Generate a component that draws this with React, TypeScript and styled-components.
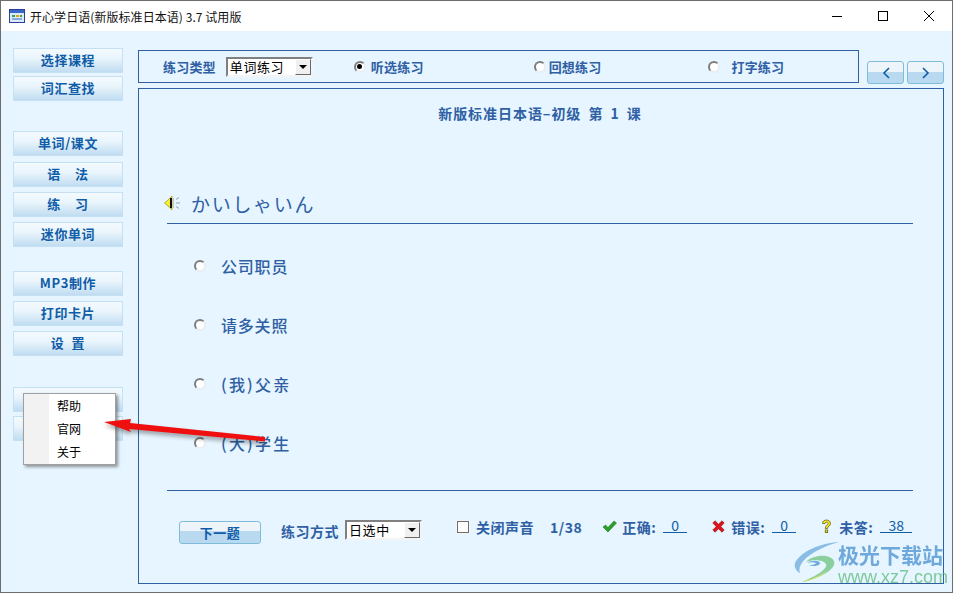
import React from 'react';
import styled, { createGlobalStyle } from 'styled-components';

const GlobalStyle = createGlobalStyle`
  html, body { margin: 0; padding: 0; background: #e6f5ff; }
  body { font-family: "Noto Sans CJK SC", "Liberation Sans", sans-serif; }
`;

const CJK = `"Noto Sans CJK SC", "Liberation Sans", sans-serif`;
const Blue = '#2f60a4';

const Window = styled.div`
  position: relative;
  box-sizing: border-box;
  width: 953px;
  height: 593px;
  border: 1px solid #6e6e6e;
  background: #e6f5ff;
  overflow: hidden;
  display: flex;
  flex-direction: column;
`;

const TitleBar = styled.div`
  height: 30px;
  flex: none;
  background: #fff;
  display: flex;
  align-items: center;
  padding-left: 8px;
`;

const TitleText = styled.div`
  margin-left: 5px;
  font-size: 12px;
  letter-spacing: 0.06px;
  color: #111;
  flex: 1;
`;

const WinButton = styled.div`
  width: 46px;
  height: 30px;
  display: flex;
  align-items: center;
  justify-content: center;
`;

const Body = styled.div`
  flex: 1;
  display: flex;
  min-height: 0;
`;

const Sidebar = styled.div`
  width: 121px;
  flex: none;
  box-sizing: border-box;
  padding: 17px 0 0 12px;
  display: flex;
  flex-direction: column;
`;

const SideButton = styled.div<{ $top: number }>`
  width: 110px;
  height: 25px;
  flex: none;
  box-sizing: border-box;
  margin-top: ${p => p.$top}px;
  padding-bottom: 2px;
  border: 1px solid #c4e0f2;
  background: linear-gradient(#f3fafe, #eaf5fc 40%, #c0dcf1);
  color: #0f5ca8;
  font-size: 13px;
  font-weight: 700;
  letter-spacing: 0.6px;
  white-space: pre;
  display: flex;
  align-items: center;
  justify-content: center;
`;

const Content = styled.div`
  flex: 1;
  display: flex;
  flex-direction: column;
  padding: 19px 8px 8px 16px;
  min-width: 0;
`;

const TopRow = styled.div`
  display: flex;
  align-items: flex-end;
  height: 33px;
  flex: none;
`;

const TopPanel = styled.div`
  box-sizing: border-box;
  width: 722px;
  height: 33px;
  border: 1px solid ${Blue};
  display: flex;
  align-items: center;
  padding-left: 24px;
`;

const NavGroup = styled.div`
  display: flex;
  gap: 3px;
  margin-left: 8px;
  margin-bottom: -1px;
`;

const NavButton = styled.div`
  box-sizing: border-box;
  width: 37px;
  height: 23px;
  border: 1px solid #7fbcd9;
  border-radius: 3px;
  background: linear-gradient(#edf5fb 50%, #b9d9f0 50%);
  display: flex;
  align-items: center;
  justify-content: center;
`;

const MainPanel = styled.div`
  flex: 1;
  margin-top: 5px;
  border: 1px solid ${Blue};
  display: flex;
  flex-direction: column;
  padding: 0 30px 0 28px;
  min-height: 0;
`;

const Label = styled.span<{ $left?: number; $large?: boolean }>`
  margin-left: ${p => p.$left ?? 0}px;
  font-family: ${CJK};
  font-size: ${p => (p.$large ? 14 : 13)}px;
  font-weight: 700;
  letter-spacing: ${p => (p.$large ? 0.5 : 0.2)}px;
  color: ${Blue};
  white-space: nowrap;
`;

const FooterLabel = styled(Label)`
  margin-bottom: 3px;
`;

const StatLabel = styled(Label)`
  display: inline-block;
  width: 37px;
`;

const Select = styled.div<{ $width: number; $left: number }>`
  box-sizing: border-box;
  width: ${p => p.$width}px;
  height: 20px;
  margin-left: ${p => p.$left}px;
  background: #fff;
  border: 2px solid;
  border-color: #808080 #f4f4f4 #f4f4f4 #808080;
  display: flex;
  align-items: center;
  font-size: 13px;
  letter-spacing: 0.6px;
  color: #000;
  padding-left: 2px;
  position: relative;
`;

const FooterSelect = styled(Select)`
  margin-bottom: 5px;
`;

const SelectArrow = styled.div`
  position: absolute;
  right: 0;
  top: 0;
  bottom: 0;
  width: 16px;
  box-sizing: border-box;
  background: #f0f0f0;
  border: 1px solid;
  border-color: #fff #696969 #696969 #fff;
  display: flex;
  align-items: center;
  justify-content: center;
  &::after {
    content: '';
    border-left: 4px solid transparent;
    border-right: 4px solid transparent;
    border-top: 4px solid #000;
  }
`;

const Radio = styled.div<{ $left: number; $on?: boolean }>`
  box-sizing: border-box;
  width: 12px;
  height: 12px;
  flex: none;
  margin-left: ${p => p.$left}px;
  border-radius: 50%;
  background: #fff;
  border: 2px solid;
  border-color: #7d7d7d #e8eef2 #e8eef2 #7d7d7d;
  display: flex;
  align-items: center;
  justify-content: center;
  &::after {
    content: '';
    display: ${p => (p.$on ? 'block' : 'none')};
    width: 5px;
    height: 5px;
    border-radius: 50%;
    background: #000;
  }
`;

const Heading = styled.div`
  margin-top: 14px;
  text-align: center;
  font-size: 14px;
  line-height: 20px;
  font-weight: 700;
  letter-spacing: 0.95px;
  word-spacing: 3px;
  color: ${Blue};
`;

const Question = styled.div`
  margin-top: 60px;
  height: 40px;
  display: flex;
  align-items: center;
  margin-left: -3px;
  box-sizing: border-box;
`;

const Rule = styled.div`
  height: 1px;
  flex: none;
  background: ${Blue};
`;

const Kana = styled.span`
  margin-left: 10px;
  font-size: 19px;
  letter-spacing: 1.7px;
  color: ${Blue};
`;

const Options = styled.div`
  height: 266px;
  padding-top: 12px;
  box-sizing: border-box;
  display: flex;
  flex-direction: column;
`;

const Option = styled.div`
  height: 59px;
  display: flex;
  align-items: center;
  flex: none;
`;

const OptionText = styled.span<{ $spacing: number }>`
  margin-left: 15px;
  font-size: 16px;
  font-weight: 500;
  letter-spacing: ${p => p.$spacing}px;
  color: ${Blue};
`;

const Footer = styled.div`
  margin-top: 29px;
  height: 24px;
  display: flex;
  align-items: center;
`;

const Stats = styled.div`
  display: flex;
  align-items: center;
  margin-bottom: 11px;
`;

const NextButton = styled.div`
  box-sizing: border-box;
  width: 82px;
  height: 23px;
  margin-left: 12px;
  border: 1px solid #7fbcd9;
  border-radius: 3px;
  background: linear-gradient(#edf5fb 45%, #b9d9f0 45%);
  color: #0f5ca8;
  font-size: 13px;
  font-weight: 700;
  letter-spacing: 0.5px;
  display: flex;
  align-items: center;
  justify-content: center;
`;

const CheckBox = styled.div`
  box-sizing: border-box;
  width: 12px;
  height: 12px;
  margin-left: 35px;
  background: #fff;
  border: 1px solid #707070;
  outline: 1px solid #f2f4f6;
`;

const Score = styled.span<{ $width: number }>`
  display: inline-block;
  width: ${p => p.$width}px;
  margin: 0 0 2px 4px;
  border-bottom: 1px solid #0f5ca8;
  text-align: center;
  font-size: 14px;
  line-height: 14px;
  color: #0f5ca8;
`;

const IconSlot = styled.span<{ $left: number }>`
  display: flex;
  margin-left: ${p => p.$left}px;
  margin-right: 5px;
`;

const Menu = styled.div`
  position: absolute;
  left: 22px;
  top: 392px;
  width: 93px;
  height: 72px;
  box-sizing: border-box;
  background: linear-gradient(90deg, #f2f2f2 25px, #fff 25px);
  border: 1px solid #a0a0a0;
  box-shadow: 2px 2px 3px rgba(0, 0, 0, 0.4);
  padding: 0 0 0 33px;
`;

const MenuItem = styled.div`
  height: 23px;
  line-height: 23px;
  font-size: 12px;
  color: #000;
`;

const Overlay = styled.svg`
  position: absolute;
  left: -1px;
  top: -1px;
  pointer-events: none;
  filter: drop-shadow(0 3px 2px rgba(0, 0, 0, 0.35));
`;

const Watermark = styled.div`
  position: absolute;
  left: 792px;
  top: 540px;
  display: flex;
  opacity: 0.85;
`;

const BrandColumn = styled.div`
  display: flex;
  flex-direction: column;
  margin-left: -3px;
`;

const BrandName = styled.span`
  font-size: 21px;
  line-height: 26px;
  font-weight: 700;
  color: #5b9bd5;
`;

const BrandUrl = styled.span`
  margin-top: 1px;
  font-family: "Liberation Sans", sans-serif;
  font-size: 18px;
  line-height: 18px;
  color: #6cc28a;
`;

const sideButtons: [string, number][] = [
  ['选择课程', 0],
  ['词汇查找', 3],
  ['单词/课文', 30],
  ['语    法', 6],
  ['练    习', 5],
  ['迷你单词', 5],
  ['MP3制作', 24],
  ['打印卡片', 5],
  ['设  置', 5],
  ['', 31],
  ['', 4],
];

const options: [string, number][] = [
  ['公司职员', 0.8],
  ['请多关照', 0.8],
  ['(我)父亲', 2.2],
  ['(大)学生', 2.2],
];

function AppIcon() {
  return (
    <svg width="16" height="14" viewBox="0 0 16 14">
      <rect x="0.5" y="0.5" width="15" height="13" fill="#dcebfa" stroke="#2b3f9a" />
      <rect x="1" y="1" width="14" height="3" fill="#3a66c8" />
      <rect x="3" y="6" width="3" height="2" fill="#3aa14a" />
      <rect x="7" y="6" width="3" height="2" fill="#e2a21f" />
      <rect x="11" y="6" width="2" height="2" fill="#3aa14a" />
      <rect x="3" y="9" width="10" height="2" fill="#8fa8dd" />
    </svg>
  );
}

function Chevron({ flip }: { flip?: boolean }) {
  return (
    <svg width="8" height="12" viewBox="0 0 8 12">
      <path d={flip ? 'M1 1l5 5-5 5' : 'M7 1L2 6l5 5'} fill="none" stroke="#0f5ca8" strokeWidth="1.6" />
    </svg>
  );
}

function SpeakerIcon() {
  return (
    <svg width="17" height="16" viewBox="0 0 17 16">
      <path d="M0.500 8L4 5l4-4v14l-4-4z" fill="#f6ee2c" stroke="#a8a020" strokeWidth="0.8" />
      <path d="M6 3h2v10H6z" fill="#111" />
      <path d="M9 3h1v10H9z" fill="#c8c8c8" />
      <path d="M12 4.500l3-2M12 8h4M12 11.500l3 2" stroke="#a0a0a0" strokeWidth="1" fill="none" />
    </svg>
  );
}

function CheckIcon() {
  return (
    <svg width="15" height="13" viewBox="0 0 15 13">
      <path d="M1 7l2.500-2 2.500 2.500L12 1l2.500 2L6 12z" fill="#2e9e2a" stroke="#1f7d1d" strokeWidth="0.6" />
    </svg>
  );
}

function CrossIcon() {
  return (
    <svg width="13" height="13" viewBox="0 0 13 13">
      <path d="M0.800 3L3 .8l3.500 3.400L10 .8 12.200 3 8.800 6.500l3.400 3.500-2.200 2.200-3.500-3.400L3 12.200 .8 10l3.400-3.500z" fill="#e1121a" stroke="#7d1015" strokeWidth="0.6" />
    </svg>
  );
}

function QuestionIcon() {
  return (
    <svg width="11" height="15" viewBox="0 0 11 15">
      <path d="M1.500 4.500C1.500 2.300 3.300 1 5.500 1s4 1.300 4 3.400c0 2.600-3 2.800-3 5.100H4.300c0-3.300 2.700-3.500 2.700-5 0-.8-.6-1.300-1.500-1.300S4 3.700 4 4.500z" fill="#f5e61e" stroke="#6d6410" strokeWidth="0.8" />
      <rect x="4.300" y="11" width="2.400" height="2.600" fill="#f5e61e" stroke="#6d6410" strokeWidth="0.8" />
    </svg>
  );
}

function SwirlLogo() {
  return (
    <svg width="48" height="42" viewBox="0 0 48 42">
      <path d="M46 1C28 2 8 10 2 22c-1 4 1 8 5 10C3 20 24 7 46 1z" fill="#79b4e2" />
      <path d="M13 21c6-7 24-9 28-1 3 7-12 17-32 21 14-6 26-13 24-18-2-4-13-5-20-2z" fill="#7cc98f" />
      <path d="M9 41c10-3 20-7 26-12-6 6-14 10-26 12z" fill="#d8dd4f" />
      <path d="M14 22c4-3 12-3 13 0 0 3-7 4-11 2 4 0 7-1 7-2-2-1-6-1-9 0z" fill="#5a9fd8" />
    </svg>
  );
}

export default function App() {
  return (
    <>
      <GlobalStyle />
      <Window>
        <TitleBar>
          <AppIcon />
          <TitleText>开心学日语(新版标准日本语) 3.7 试用版</TitleText>
          <WinButton>
            <svg width="10" height="10" viewBox="0 0 10 10"><path d="M0 5.500h10" stroke="#000" /></svg>
          </WinButton>
          <WinButton>
            <svg width="10" height="10" viewBox="0 0 10 10"><rect x="0.500" y="0.500" width="9" height="9" fill="none" stroke="#000" /></svg>
          </WinButton>
          <WinButton>
            <svg width="10" height="10" viewBox="0 0 10 10"><path d="M0 0l10 10M10 0L0 10" stroke="#000" /></svg>
          </WinButton>
        </TitleBar>
        <Body>
          <Sidebar>
            {sideButtons.map(([text, top], i) => (
              <SideButton key={i} $top={top}>{text}</SideButton>
            ))}
          </Sidebar>
          <Content>
            <TopRow>
              <TopPanel>
                <Label>练习类型</Label>
                <Select $width={87} $left={10}>单词练习<SelectArrow /></Select>
                <Radio $left={41} $on />
                <Label $left={5}>听选练习</Label>
                <Radio $left={110} />
                <Label $left={3}>回想练习</Label>
                <Radio $left={107} />
                <Label $left={11}>打字练习</Label>
              </TopPanel>
              <NavGroup>
                <NavButton><Chevron /></NavButton>
                <NavButton><Chevron flip /></NavButton>
              </NavGroup>
            </TopRow>
            <MainPanel>
              <Heading>新版标准日本语–初级 第 1 课</Heading>
              <Question>
                <SpeakerIcon />
                <Kana>かいしゃいん</Kana>
              </Question>
              <Rule />
              <Options>
                {options.map(([text, spacing]) => (
                  <Option key={text}>
                    <Radio $left={27} />
                    <OptionText $spacing={spacing}>{text}</OptionText>
                  </Option>
                ))}
              </Options>
              <Rule />
              <Footer>
                <NextButton>下一题</NextButton>
                <FooterLabel $left={20} $large>练习方式</FooterLabel>
                <FooterSelect $width={77} $left={6}>日选中<SelectArrow /></FooterSelect>
                <Stats>
                  <CheckBox />
                  <Label $left={7} $large>关闭声音</Label>
                  <Label $left={16} $large>1/38</Label>
                  <IconSlot $left={20}><CheckIcon /></IconSlot>
                  <StatLabel $large>正确:</StatLabel>
                  <Score $width={24}>0</Score>
                  <IconSlot $left={25}><CrossIcon /></IconSlot>
                  <StatLabel $left={1} $large>错误:</StatLabel>
                  <Score $width={24}>0</Score>
                  <IconSlot $left={25}><QuestionIcon /></IconSlot>
                  <StatLabel $left={2} $large>未答:</StatLabel>
                  <Score $width={32}>38</Score>
                </Stats>
              </Footer>
            </MainPanel>
          </Content>
        </Body>
        <Menu>
          <MenuItem>帮助</MenuItem>
          <MenuItem>官网</MenuItem>
          <MenuItem>关于</MenuItem>
        </Menu>
        <Overlay width="953" height="593" viewBox="0 0 953 593">
          <path d="M265 441.500L129 429l2 3-27-10 27-3-1 4 135 14z" fill="#f00f0f" />
        </Overlay>
        <Watermark>
          <SwirlLogo />
          <BrandColumn>
            <BrandName>极光下载站</BrandName>
            <BrandUrl>www.xz7.com</BrandUrl>
          </BrandColumn>
        </Watermark>
      </Window>
    </>
  );
}
